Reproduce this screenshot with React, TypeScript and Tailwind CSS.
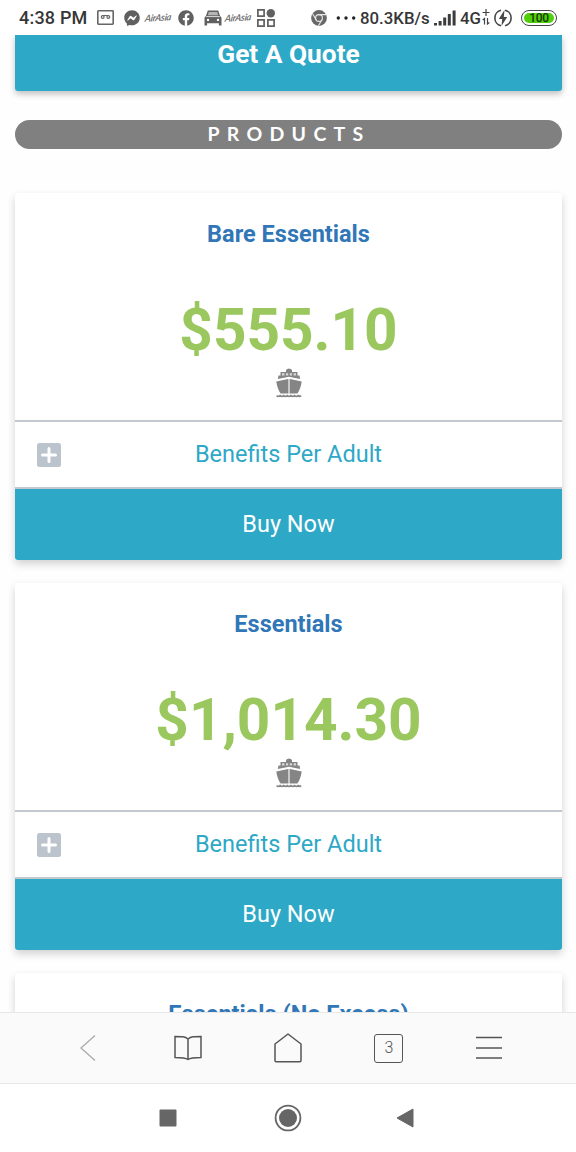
import type { ReactNode } from "react";
import { FaFacebook, FaFacebookMessenger } from "react-icons/fa";

function Ship() {
  return (
    <svg width="26" height="30" viewBox="0 0 26 30" className="block" fill="#858585">
      <path d="M10 4V2Q11 .5 13 .5T16 2v2h5.500v3.500h2L24.200 11 13 8.800 1.800 11l.7-3.500h2V4z" />
      <path d="M6 5.200h2.500v2.300H6zM10 5.200h2.200v2.300H10zM13.800 5.200H16v2.300h-2.200zM17.600 5.200H20v2.300h-2.400z" fill="#d8d8d8" />
      <path d="M.3 13.400 12 11V25.600H4.600C2.400 22 .8 18 .3 13.400zM14 11l11.700 2.400c-.5 4.600-2.100 8.600-4.300 12.200H14z" />
      <path d="M12 11h2v14.600h-2z" fill="#c8c8c8" />
      <path d="M.5 27.600q1.800 1.600 3.600 0 1.800 1.600 3.600 0 1.800 1.600 3.600 0 1.800 1.600 3.600 0 1.800 1.600 3.600 0 1.800 1.600 3.600 0 1.500 1.300 3 0" fill="none" stroke="#858585" strokeWidth="1.800" />
    </svg>
  );
}

function AirAsia() {
  return (
    <span className="flex h-5 w-[27px] shrink-0 items-center justify-center whitespace-nowrap font-[Lato,sans-serif] text-[9.500px] font-semibold italic leading-5 tracking-[-0.300px] text-[#666]">
      <span className="-rotate-3 -skew-x-12">AirAsia</span>
    </span>
  );
}

function StatusBar() {
  return (
    <header className="flex h-[35px] shrink-0 items-center bg-white pl-[19px] pr-[19px] text-[#363636]">
      <span className="w-[78px] shrink-0 whitespace-nowrap text-[18px] font-medium leading-5 tracking-[0.200px]">4:38 PM</span>
      <svg width="17" height="15" viewBox="0 0 17 15" fill="none" stroke="#666" className="shrink-0">
        <rect x=".8" y=".8" width="15.400" height="13.400" rx=".6" strokeWidth="1.600" />
        <circle cx="5.700" cy="7" r="1.400" strokeWidth="1.200" />
        <circle cx="11.300" cy="7" r="1.400" strokeWidth="1.200" />
        <path d="M5.700 5.500h5.600" strokeWidth="1" />
      </svg>
      <FaFacebookMessenger className="ml-[10px] size-4 shrink-0 text-[#606060]" />
      <div className="ml-[5px] mr-px"><AirAsia /></div>
      <FaFacebook className="ml-[4.500px] size-4 shrink-0 text-[#606060]" />
      <svg width="18" height="16" viewBox="0 0 18 16" className="ml-[10px] shrink-0">
        <path d="M3.800.5h10.400L16 5.800l1.500 2V15.500h-2.600V13.300H3.100v2.200H.5V7.800l1.500-2z" fill="#606060" />
        <path d="M4.800 2h8.400l1 3.300H3.800z" fill="#b5b5b5" />
        <path d="M2.200 6.600h13.600" stroke="white" strokeWidth=".8" />
        <circle cx="4" cy="9.900" r="1.200" fill="white" /><circle cx="14" cy="9.900" r="1.200" fill="white" />
      </svg>
      <div className="ml-[3.500px] mr-px"><AirAsia /></div>
      <svg width="18" height="18" viewBox="0 0 18 18" className="ml-[4px] shrink-0" fill="none" stroke="#606060" strokeWidth="1.700">
        <path d="M.9.900h6.200v6.200H.9zM.9 10.900h6.200v6.200H.9zM10.900 10.900h6.200v6.200h-6.200z" />
        <circle cx="13.800" cy="4.200" r="4.200" fill="#606060" stroke="none" />
      </svg>
      <svg width="16" height="16" viewBox="0 0 16 16" className="ml-[36px] shrink-0">
        <circle cx="8" cy="8" r="7.900" fill="#686868" />
        <circle cx="8" cy="8" r="3.400" fill="none" stroke="#e8e8e8" strokeWidth="1.100" />
        <path d="M8 4.600h7.500M5.100 9.700 1.600 3.800M10.900 9.700 7.400 15.800" stroke="#e8e8e8" strokeWidth="1.100" />
      </svg>
      <svg width="20" height="4" viewBox="0 0 20 4" className="ml-[9px] shrink-0" fill="#222">
        <circle cx="2.300" cy="2" r="1.700" /><circle cx="10" cy="2" r="1.700" /><circle cx="17.700" cy="2" r="1.700" />
      </svg>
      <span className="ml-[4px] w-[74px] shrink-0 whitespace-nowrap text-[16.800px] font-medium leading-5">80.3KB/s</span>
      <svg width="22" height="16" viewBox="0 0 22 16" className="shrink-0" fill="#3c3c3c">
        <path d="M0 13h3v2.500H0zM4.600 11h3v4.500h-3zM9.200 7.500h3v8h-3zM13.800 4h3v11.500h-3zM18.600.500h3v15h-3z" />
      </svg>
      <span className="ml-[4px] w-[22px] shrink-0 text-[16.800px] font-medium leading-5">4G</span>
      <svg width="8" height="17" viewBox="0 0 8 17" className="shrink-0" fill="none" stroke="#444" strokeWidth="1.200">
        <path d="M4 0v7M.5 3.500h7M2.500 15.500V9.500L.7 11M5.500 9v6l1.800-1.500" />
      </svg>
      <svg width="18" height="18" viewBox="0 0 18 18" className="ml-[4px] shrink-0">
        <path d="M7 1.300a7.900 7.900 0 0 0 0 15.400M11 1.300a7.900 7.900 0 0 1 0 15.400" fill="none" stroke="#484848" strokeWidth="1.600" />
        <path d="M10.500 1 4.800 10h3.400L7.500 17 13.200 8H9.800z" fill="#484848" />
      </svg>
      <div className="ml-auto flex h-[16px] w-[36px] shrink-0 items-center justify-center rounded-full border-[1.500px] border-[#444] p-[2px]">
        <div className="flex h-full w-full items-center justify-center rounded-full bg-[#50cf0b] text-[12px] font-medium leading-[14px] tracking-[-0.400px] text-[#173900]">100</div>
      </div>
    </header>
  );
}

function ProductCard({ name, price, gap }: { name: string; price?: string; gap: string }) {
  return (
    <section className={`${gap} shrink-0 overflow-hidden rounded-[3px] bg-white shadow-[0_4px_9px_rgba(0,0,0,0.180)]`}>
      <div className="flex h-[227px] flex-col items-center">
        <h2 className="mt-[25px] text-[23.500px] font-bold leading-8 text-[#3177b7]">{name}</h2>
        {price && (
          <>
            <div className="mt-[44px] whitespace-nowrap text-[58.500px] font-bold leading-[72px] text-[#9ac75e]">{price}</div>
            <div className="mt-[2px]"><Ship /></div>
          </>
        )}
      </div>
      {price && (
        <>
          <button className="grid h-[69px] w-full grid-cols-[67px_1fr_67px] items-center border-y-2 border-[#c2c8ce] text-[23.500px] font-normal text-[#2da8c6]">
            <svg width="24" height="24" viewBox="0 0 24 24" className="ml-[21.500px]">
              <rect width="24" height="24" rx="2.500" fill="#bbc3cc" />
              <path d="M12 5.500v13M5.500 12h13" stroke="white" strokeWidth="3" strokeLinecap="round" />
            </svg>
            <span>Benefits Per Adult</span>
          </button>
          <button className="flex h-[71px] w-full items-center justify-center bg-[#2da9c7] text-[23.500px] font-normal text-white">Buy Now</button>
        </>
      )}
    </section>
  );
}

function NavIcon({ children }: { children: ReactNode }) {
  return <button className="flex h-full w-[100.400px] shrink-0 items-center justify-center">{children}</button>;
}

export default function App() {
  return (
    <div className="flex h-[1152px] w-[576px] flex-col overflow-hidden bg-white font-[Roboto,sans-serif]">
      <StatusBar />
      <main className="flex min-h-0 flex-1 flex-col overflow-hidden bg-[#fefefe] pl-[15px] pr-[14px]">
        <button className="h-[56px] shrink-0 rounded-b-[3px] bg-[#2da9c7] pb-[17px] text-[26.300px] font-bold leading-[39px] text-white shadow-[0_3px_6px_rgba(0,0,0,0.250)]">Get A Quote</button>
        <h1 className="mt-[29px] flex h-[29px] shrink-0 items-center justify-center rounded-full bg-[#808080] pb-px pl-px font-[Lato,sans-serif] text-[19.500px] font-bold leading-[28px] tracking-[7.300px] text-white">PRODUCTS</h1>
        <ProductCard name="Bare Essentials" price="$555.10" gap="mt-[44px]" />
        <ProductCard name="Essentials" price="$1,014.30" gap="mt-[23px]" />
        <ProductCard name="Essentials (No Excess)" gap="mt-[23px]" />
      </main>
      <nav className="flex h-[72px] shrink-0 items-center border-y border-[#e8e8e8] bg-[#fafafa] pl-[37.500px]">
        <NavIcon>
          <svg width="16" height="26" viewBox="0 0 16 26" fill="none" stroke="#aaa" strokeWidth="1.300"><path d="M15 .5 1 13l14 12.500" /></svg>
        </NavIcon>
        <NavIcon>
          <svg width="28" height="26" viewBox="0 0 28 26" fill="none" stroke="#555" strokeWidth="1.500"><path d="M14 4C11 1.500 8 1.500 1 1.500v21c7 0 10 0 13 2 3-2 6-2 13-2v-21c-7 0-10 0-13 2.500v20.500" /></svg>
        </NavIcon>
        <NavIcon>
          <svg width="28" height="30" viewBox="0 0 28 30" fill="none" stroke="#555" strokeWidth="1.500" strokeLinejoin="round"><path d="M14 1 27 11v16.500q0 1.200-1.200 1.200H2.200Q1 28.700 1 27.500V11z" /></svg>
        </NavIcon>
        <NavIcon>
          <span className="flex size-[29px] items-center justify-center rounded-[3px] border-[1.500px] border-[#555] text-[16px] font-light text-[#555]">3</span>
        </NavIcon>
        <NavIcon>
          <svg width="28" height="24" viewBox="0 0 28 24" stroke="#555" strokeWidth="1.500"><path d="M1 1.500h26M1 12h26M1 22h26" /></svg>
        </NavIcon>
      </nav>
      <footer className="flex h-[68px] shrink-0 items-center bg-white pl-[159px]">
        <svg width="18" height="18" viewBox="0 0 18 18"><rect x=".5" y=".5" width="17" height="17" rx="1" fill="#666" /></svg>
        <svg width="28" height="28" viewBox="0 0 28 28" className="ml-[97px]"><circle cx="14" cy="14" r="12.400" fill="none" stroke="#666" strokeWidth="1.800" /><circle cx="14" cy="14" r="9" fill="#666" /></svg>
        <svg width="18" height="20" viewBox="0 0 18 20" className="ml-[94px]"><path d="M1 10 17 1v18z" fill="#666" stroke="#666" strokeLinejoin="round" /></svg>
      </footer>
    </div>
  );
}
